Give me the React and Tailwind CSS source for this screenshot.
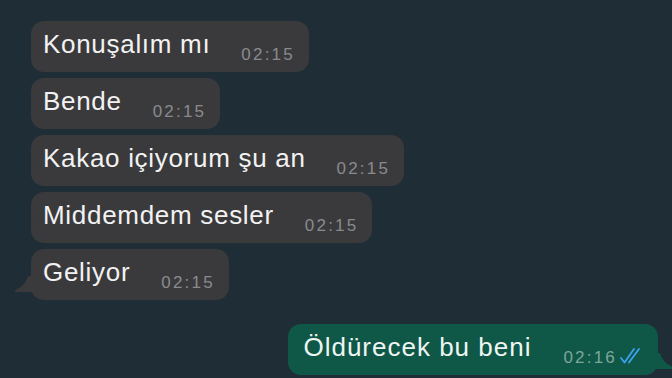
import React from "react";

const font = { fontFamily: '"Liberation Sans", Arial, sans-serif' };

function Gray({ text, time, tail }) {
  return (
    <div className="relative flex h-[51px] self-start rounded-[13px] bg-[#3a3a3c] pl-[12px] pr-[14px]">
      {tail && (
        <svg className="absolute left-[-17px] bottom-[8px]" width="20" height="16" viewBox="0 0 20 16">
          <path d="M20 0 L20 16 L2 16 Q0 15.5 1.5 14 Q12 9 14 0 Z" fill="#3a3a3c" />
        </svg>
      )}
      <span className="pt-[11px] text-[26px] leading-[25px] tracking-[0.7px] text-[#f2f2f2]">{text}</span>
      <span className="ml-[31px] pt-[26px] text-[17px] leading-[16px] tracking-[2.2px] text-[#8a8a8e]">{time}</span>
    </div>
  );
}

export default function App() {
  return (
    <div style={font} className="flex h-[378px] w-[672px] flex-col overflow-hidden bg-[#1f2d36] pl-[31px] pt-[21px]">
      <div className="flex flex-col gap-[6px]">
        <Gray text="Konuşalım mı" time="02:15" />
        <Gray text="Bende" time="02:15" />
        <Gray text="Kakao içiyorum şu an" time="02:15" />
        <Gray text="Middemdem sesler" time="02:15" />
        <Gray text="Geliyor" time="02:15" tail />
      </div>
      <div className="mt-[24px] flex justify-end pr-[14px]">
        <div className="relative flex h-[51px] rounded-[13px] bg-[#0f5847] pl-[15px] pr-[13px]">
          <svg className="absolute right-[-16px] bottom-[6px]" width="20" height="16" viewBox="0 0 20 16">
            <path d="M0 0 L0 16 L18 16 Q20 15.5 18.5 14 Q8 9 6 0 Z" fill="#0f5847" />
          </svg>
          <span className="pt-[11px] text-[26px] leading-[25px] tracking-[1px] text-[#eef5f2]">Öldürecek bu beni</span>
          <span className="ml-[32px] pt-[26px] text-[17px] leading-[16px] tracking-[2.2px] text-[#7fa69c]">02:16</span>
          <svg className="ml-[2px] mt-[23px]" width="26" height="18" viewBox="0 0 26 18">
            <path d="M2 11 L5.5 15.5 L15 2" stroke="#3ba3f2" strokeWidth="1.8" fill="none" strokeLinecap="round" strokeLinejoin="round" />
            <path d="M10 15.5 L20 2" stroke="#3ba3f2" strokeWidth="1.8" fill="none" strokeLinecap="round" />
          </svg>
        </div>
      </div>
    </div>
  );
}
